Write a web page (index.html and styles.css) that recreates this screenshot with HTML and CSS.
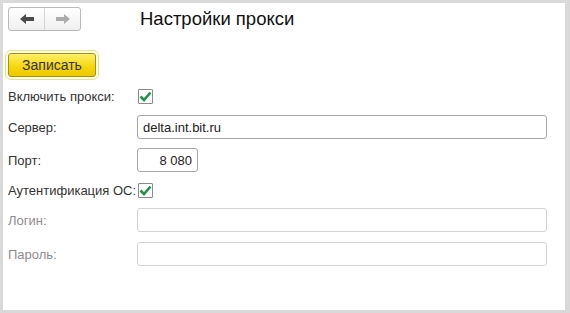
FILE: index.html
```html
<!DOCTYPE html>
<html lang="ru">
<head>
    <meta charset="UTF-8">
    <title>Настройки прокси</title>
    <link rel="stylesheet" href="styles.css">
</head>
<body>
    <div class="window">
        <div class="header">
            <div class="nav">
                <span class="nav-btn">
                    <svg width="14" height="10" viewBox="0 0 14 10"><path d="M0 5 L6 0 L6 3 L14 3 L14 7 L6 7 L6 10 Z" fill="#4a4a4a"/></svg>
                </span>
                <span class="nav-btn">
                    <svg width="14" height="10" viewBox="0 0 14 10"><path d="M14 5 L8 0 L8 3 L0 3 L0 7 L8 7 L8 10 Z" fill="#ababab"/></svg>
                </span>
            </div>
            <h1 class="title">Настройки прокси</h1>
        </div>
        <div class="toolbar">
            <button class="btn-save">Записать</button>
        </div>
        <div class="form">
            <div class="row row-check">
                <label class="label">Включить прокси:</label>
                <span class="check"><svg width="13" height="11" viewBox="0 0 13 11"><path d="M1.5 5.5 L5 9 L11.5 1.5" fill="none" stroke="#22914a" stroke-width="2.6"/></svg></span>
            </div>
            <div class="row">
                <label class="label">Сервер:</label>
                <input class="field" type="text" value="delta.int.bit.ru">
            </div>
            <div class="row">
                <label class="label">Порт:</label>
                <input class="field field-port" type="text" value="8 080">
            </div>
            <div class="row row-check">
                <label class="label">Аутентификация ОС:</label>
                <span class="check"><svg width="13" height="11" viewBox="0 0 13 11"><path d="M1.5 5.5 L5 9 L11.5 1.5" fill="none" stroke="#22914a" stroke-width="2.6"/></svg></span>
            </div>
            <div class="row">
                <label class="label label-off">Логин:</label>
                <input class="field field-off" type="text" disabled>
            </div>
            <div class="row row-last">
                <label class="label label-off">Пароль:</label>
                <input class="field field-off" type="password" disabled>
            </div>
        </div>
    </div>
</body>
</html>
```

FILE: styles.css
```css
html, body {margin: 0; padding: 0;}
body {background: #d9d9d9; padding: 3px 5px 3px 3px; font-family: Arial, "Liberation Sans", sans-serif; font-size: 13px; color: #333;}
.window {background: #fff; height: 307px; padding: 4px 0 0 5px; box-sizing: border-box;}
.header {display: flex; align-items: center; height: 24px;}
.nav {display: flex; width: 73px; height: 24px; box-sizing: border-box; border: 1px solid #b8b8b8; border-radius: 3px; background: linear-gradient(#ffffff, #efefef);}
.nav-btn {flex: 1; display: flex; align-items: center; justify-content: center;}
.nav-btn + .nav-btn {border-left: 1px solid #d4d4d4;}
.title {margin: 0 0 0 59px; font-size: 18.5px; font-weight: normal; color: #111;}
.toolbar {margin-top: 22px; height: 24px; padding-left: 0;}
.btn-save {width: 88px; height: 24px; border: 1px solid #a99300; border-radius: 3px; background: linear-gradient(#fdf06a, #f5d60a 60%, #eec800); font: 14px Arial, "Liberation Sans", sans-serif; color: #333; outline: 1px solid #ebe07a; outline-offset: 2px; padding: 0;}
.form {display: flex; flex-direction: column; gap: 9px; margin-top: 9px;}
.row {display: flex; align-items: center; height: 24px;}
.row-check {height: 20px;}
.row + .row-check {height: 18px;}
.row-last {margin-top: 1px;}
.label {width: 129px; flex: none;}
.label-off {color: #8c8c8c;}
.check {width: 15px; height: 15px; box-sizing: border-box; border: 1px solid #8a8a8a; border-radius: 1px; display: flex; align-items: center; justify-content: center; margin-left: 1px;}
.field {width: 410px; height: 24px; box-sizing: border-box; border: 1px solid #a6a6a6; border-radius: 3px; padding: 0 5px; font: 13px Arial, "Liberation Sans", sans-serif; color: #222; background: #fff;}
.field-port {width: 61px; text-align: right;}
.field-off {border-color: #d3d3d3;}
```
